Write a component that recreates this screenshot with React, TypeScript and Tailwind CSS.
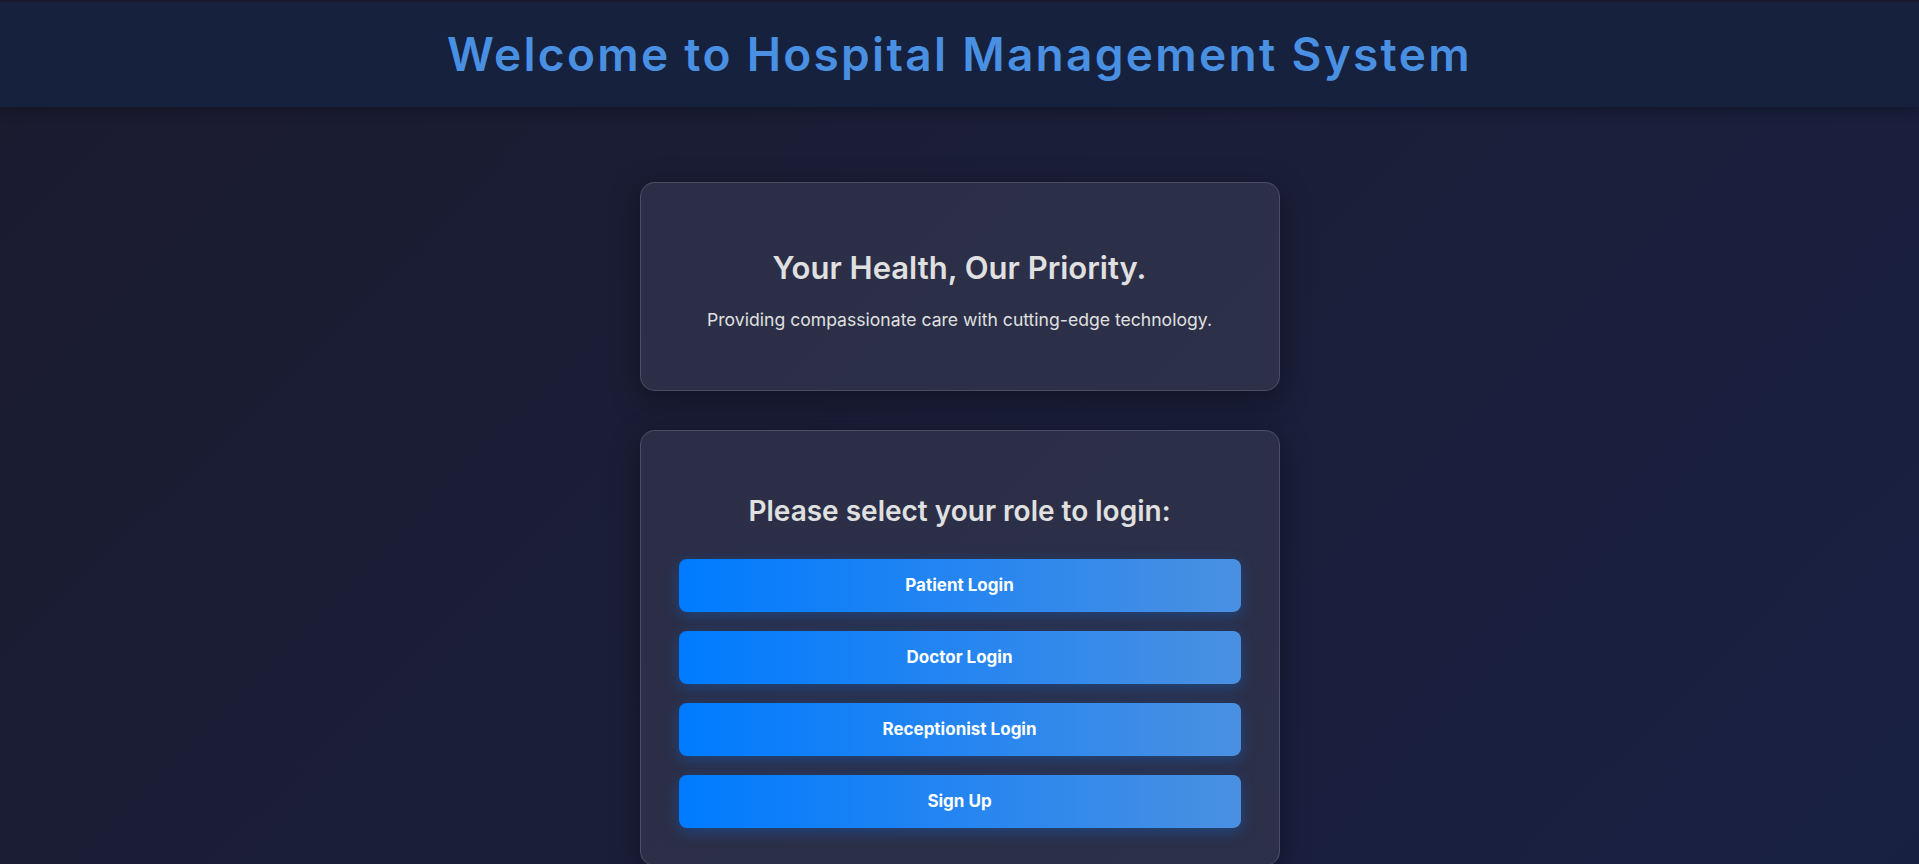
import React from "react";

const font = { fontFamily: "Inter, 'Open Sans', sans-serif" };

export default function App() {
  const roles = ["Patient Login", "Doctor Login", "Receptionist Login", "Sign Up"];
  return (
    <div
      className="min-h-screen w-full bg-[linear-gradient(135deg,#1b1b2f_0%,#1a1e38_50%,#182042_100%)] text-[#e0e0e0]"
      style={font}
    >
      <header className="h-[107px] w-full bg-[#16213e] border-t-2 border-[#1a1a2e] shadow-[0_4px_12px_rgba(0,0,0,0.25)] flex items-center justify-center">
        <h1 className="text-[46px] font-semibold tracking-[2.3px] text-[#4a90e2] leading-none pb-[2px]">
          Welcome to Hospital Management System
        </h1>
      </header>

      <main className="flex flex-col items-center pt-[75px] gap-[39px]">
        <section className="w-[640px] h-[209px] rounded-[15px] border border-white/15 bg-[linear-gradient(135deg,#2b2e46_0%,#2c3049_100%)] shadow-[0_8px_30px_rgba(0,0,0,0.35)] flex flex-col items-center justify-center pt-[8px]">
          <h2 className="text-[31px] font-semibold text-[#e0e0e0] leading-none mb-[28px]">
            Your Health, Our Priority.
          </h2>
          <p className="text-[17.6px] text-[#e0e0e0] leading-none">
            Providing compassionate care with cutting-edge technology.
          </p>
        </section>

        <section className="w-[640px] rounded-[15px] border border-white/15 bg-[linear-gradient(135deg,#2b2e46_0%,#2c3049_100%)] shadow-[0_8px_30px_rgba(0,0,0,0.35)] px-[38px] pt-[66px] pb-[37px] flex flex-col items-center">
          <h3 className="text-[28px] font-semibold text-[#e0e0e0] leading-none mb-[34px]">
            Please select your role to login:
          </h3>
          <div className="w-full flex flex-col gap-[19px]">
            {roles.map((r) => (
              <button
                key={r}
                className="w-full h-[53px] rounded-[8px] bg-[linear-gradient(90deg,#007bff_0%,#4a90e2_100%)] text-white text-[17px] font-bold shadow-[0_4px_15px_rgba(0,123,255,0.3)]"
              >
                {r}
              </button>
            ))}
          </div>
        </section>
      </main>
    </div>
  );
}
